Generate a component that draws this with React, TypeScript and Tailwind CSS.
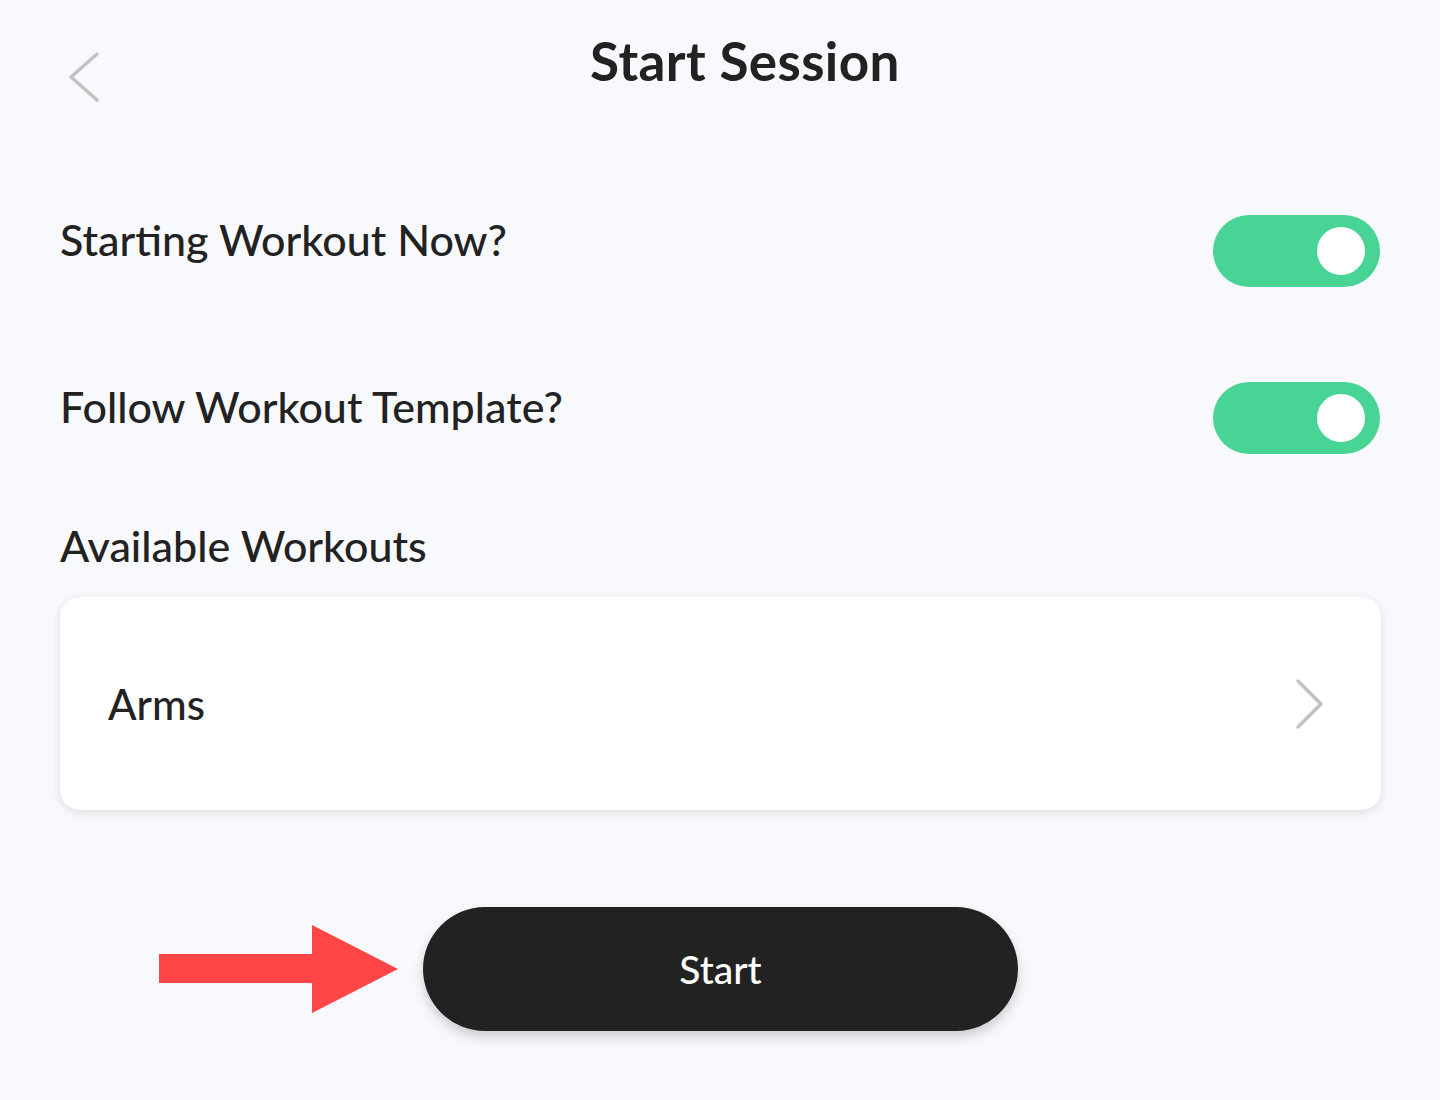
import React from "react";

function Toggle() {
  return (
    <div className="w-[167px] h-[72px] rounded-full bg-[#48d494] flex items-center justify-end pr-[15px]">
      <div className="w-[48px] h-[48px] rounded-full bg-white" />
    </div>
  );
}

export default function App() {
  return (
    <div
      className="w-[1440px] h-[1100px] bg-[#f8f9fd] text-[#222222] flex flex-col"
      style={{ fontFamily: "Lato, 'Noto Sans', sans-serif" }}
    >
      <div className="relative h-[130px] flex justify-center">
        <svg
          className="absolute left-[66px] top-[50px]"
          width="36"
          height="54"
          viewBox="0 0 36 54"
          fill="none"
        >
          <path d="M31 4 L5 27 L31 50" stroke="#c2c2c2" strokeWidth="3.5" strokeLinecap="round" strokeLinejoin="round" />
        </svg>
        <h1 className="mt-[34px] ml-[50px] text-[53px] font-bold leading-none tracking-[0.4px]">Start Session</h1>
      </div>

      <div className="px-[60px] flex flex-col">
        <div className="flex items-center justify-between mt-[85px]">
          <span className="text-[43px] font-medium leading-none -mt-[24px]">Starting Workout Now?</span>
          <Toggle />
        </div>
        <div className="flex items-center justify-between mt-[95px]">
          <span className="text-[43px] font-medium leading-none -mt-[24px]">Follow Workout Template?</span>
          <Toggle />
        </div>
        <div className="mt-[70px] text-[43px] font-medium leading-none">Available Workouts</div>
        <div className="mt-[30px] h-[213px] w-[1321px] bg-white rounded-[20px] shadow-[0_2px_8px_rgba(0,0,0,0.12)] flex items-center justify-between pl-[48px] pr-[56px]">
          <span className="text-[42px] font-medium leading-none">Arms</span>
          <svg width="30" height="52" viewBox="0 0 30 52" fill="none">
            <path d="M3 3 L26 26 L3 49" stroke="#c2c2c2" strokeWidth="3.5" strokeLinecap="round" strokeLinejoin="round" />
          </svg>
        </div>
        <div className="mt-[97px] flex items-center">
          <svg className="ml-[99px]" width="240" height="88" viewBox="0 0 240 88">
            <polygon points="0,29 153,29 153,0 239,44 153,88 153,58 0,58" fill="#ff4545" />
          </svg>
          <button className="ml-[24px] w-[595px] h-[124px] rounded-full bg-[#222222] text-white text-[39px] font-medium shadow-[0_6px_12px_rgba(0,0,0,0.18)]">
            Start
          </button>
        </div>
      </div>
    </div>
  );
}
